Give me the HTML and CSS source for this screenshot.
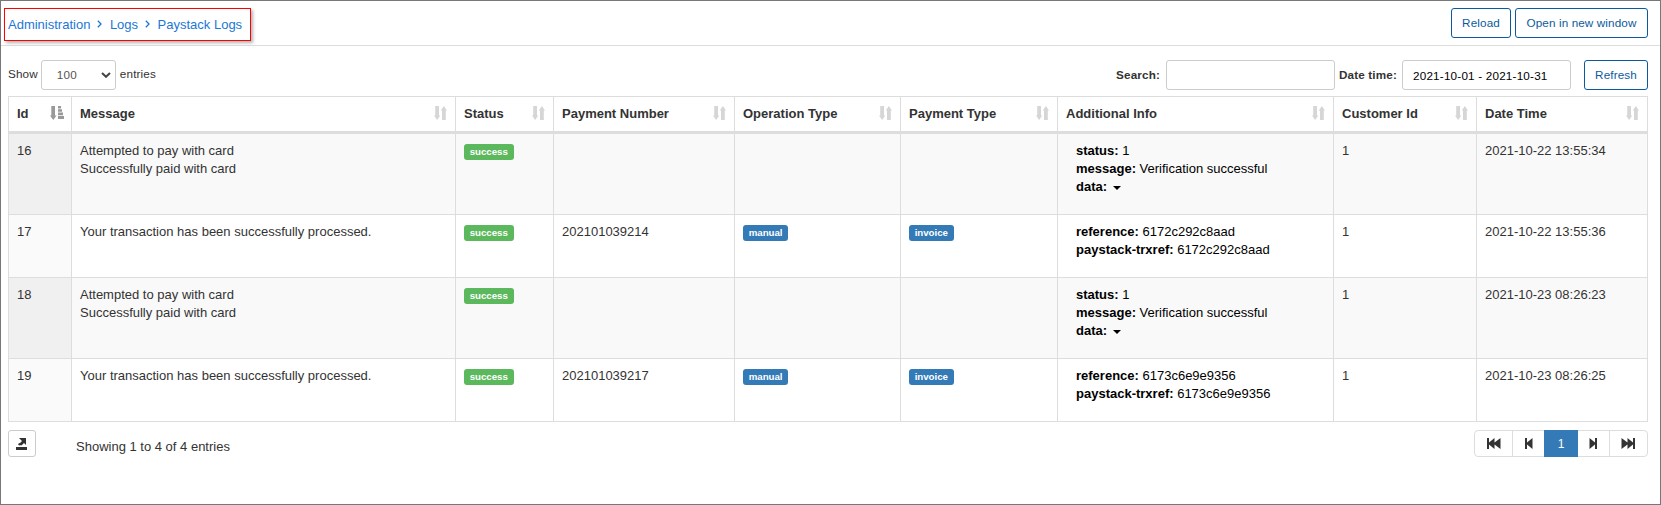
FILE: index.html
```html
<!DOCTYPE html>
<html lang="en">
<head>
<meta charset="utf-8">
<title>Paystack Logs</title>
<link rel="stylesheet" href="styles.css">
</head>
<body>
<svg class="defs" width="0" height="0">
  <symbol id="sort" viewBox="0 0 13 14"><path d="M1.200 0h3.800v9.500h1.300L3.100 14 0 9.500h1.200zM8 14V4.500H6.700L9.900 0 13 4.500h-1.200V14z"/></symbol>
  <symbol id="sort-asc" viewBox="0 0 14 14"><path d="M1.300 0h3.700v9.500h1.500l-3.250 4.500L0 9.500h1.300zM8 0h3v2.500H8zM8 3.200h4v2.600H8zM8 6.600h5v2.600H8zM8 10h6v3H8z"/></symbol>
  <symbol id="prev" viewBox="0 0 8 11"><path d="M0 0h2v4.500L7.500 0v11L2 6.500V11H0z"/></symbol>
  <symbol id="first" viewBox="0 0 14 11"><path d="M0 0h2v4.500L7.500 0v4.500L13.500 0v11L7.500 6.500V11L2 6.500V11H0z"/></symbol>
</svg>
<div class="page">
  <header class="topbar">
    <nav class="breadcrumb">
      <a>Administration</a><svg class="chevron" viewBox="0 0 5 8"><path d="M.8 .8 4 4 .8 7.200"/></svg><a>Logs</a><svg class="chevron" viewBox="0 0 5 8"><path d="M.8 .8 4 4 .8 7.200"/></svg><a>Paystack Logs</a>
    </nav>
    <div class="actions"><button class="btn reload">Reload</button><button class="btn open">Open in new window</button></div>
  </header>
  <section class="toolbar">
    <div class="length"><span>Show</span><div class="select"><span>100</span><svg viewBox="0 0 10 6"><path d="M1 1l4 3.800L9 1"/></svg></div><span>entries</span></div>
    <div class="filters">
      <label class="search-label">Search:</label><div class="input search"></div>
      <label class="date-label">Date time:</label><div class="input date">2021-10-01 - 2021-10-31</div>
      <button class="btn refresh">Refresh</button>
    </div>
  </section>
  <table class="logs">
    <colgroup><col class="c-id"><col class="c-message"><col class="c-status"><col class="c-number"><col class="c-operation"><col class="c-payment"><col class="c-info"><col class="c-customer"><col class="c-date"></colgroup>
    <thead><tr>
      <th><div class="head">Id<svg class="sorted"><use href="#sort-asc"/></svg></div></th>
      <th><div class="head">Message<svg><use href="#sort"/></svg></div></th>
      <th><div class="head">Status<svg><use href="#sort"/></svg></div></th>
      <th><div class="head">Payment Number<svg><use href="#sort"/></svg></div></th>
      <th><div class="head">Operation Type<svg><use href="#sort"/></svg></div></th>
      <th><div class="head">Payment Type<svg><use href="#sort"/></svg></div></th>
      <th><div class="head">Additional Info<svg><use href="#sort"/></svg></div></th>
      <th><div class="head">Customer Id<svg><use href="#sort"/></svg></div></th>
      <th><div class="head">Date Time<svg><use href="#sort"/></svg></div></th>
    </tr></thead>
    <tbody>
      <tr><td>16</td><td>Attempted to pay with card<br>Successfully paid with card</td><td><span class="label success">success</span></td><td></td><td></td><td></td><td><div class="info"><b>status:</b> 1<br><b>message:</b> Verification successful<br><b>data:</b> <i class="caret"></i></div></td><td>1</td><td>2021-10-22 13:55:34</td></tr>
      <tr><td>17</td><td>Your transaction has been successfully processed.</td><td><span class="label success">success</span></td><td>202101039214</td><td><span class="label">manual</span></td><td><span class="label">invoice</span></td><td><div class="info"><b>reference:</b> 6172c292c8aad<br><b>paystack-trxref:</b> 6172c292c8aad</div></td><td>1</td><td>2021-10-22 13:55:36</td></tr>
      <tr><td>18</td><td>Attempted to pay with card<br>Successfully paid with card</td><td><span class="label success">success</span></td><td></td><td></td><td></td><td><div class="info"><b>status:</b> 1<br><b>message:</b> Verification successful<br><b>data:</b> <i class="caret"></i></div></td><td>1</td><td>2021-10-23 08:26:23</td></tr>
      <tr><td>19</td><td>Your transaction has been successfully processed.</td><td><span class="label success">success</span></td><td>202101039217</td><td><span class="label">manual</span></td><td><span class="label">invoice</span></td><td><div class="info"><b>reference:</b> 6173c6e9e9356<br><b>paystack-trxref:</b> 6173c6e9e9356</div></td><td>1</td><td>2021-10-23 08:26:25</td></tr>
    </tbody>
  </table>
  <footer class="footer">
    <button class="export"><svg viewBox="0 0 11 12"><path d="M3 0h7v7L8 5 5.500 7.500 3.500 5.500 6 3zM0 9h11v3H0zM2 6l1.500-1L5 7 3 7.500z"/></svg></button>
    <span class="summary">Showing 1 to 4 of 4 entries</span>
    <div class="pages">
      <a class="wide"><svg width="14" height="11"><use href="#first"/></svg></a>
      <a class="step"><svg width="8" height="11"><use href="#prev"/></svg></a>
      <a class="current">1</a>
      <a class="step next"><svg class="flip" width="8" height="11"><use href="#prev"/></svg></a>
      <a class="wide last"><svg class="flip" width="14" height="11"><use href="#first"/></svg></a>
    </div>
  </footer>
</div>
</body>
</html>
```

FILE: styles.css
```css
* { box-sizing: border-box; }
body {
  margin: 0;
  color: #333;
  background: #fff;
  font: 13px/18px "Liberation Sans", Arial, sans-serif;
}
button { font: inherit; padding: 0; background: #fff; }
.defs { display: block; }
.page { height: 505px; border: 1px solid #777; overflow: hidden; }

.topbar {
  display: flex;
  justify-content: space-between;
  height: 45px;
  padding: 7px 12px 0 3px;
  border-bottom: 1px solid #ddd;
}
.breadcrumb {
  display: flex;
  align-items: center;
  width: 247px;
  height: 33px;
  padding: 1px 0 0 3px;
  border: 1px solid #f00;
  box-shadow: 2px 2px 3px rgba(0, 0, 0, .3);
  color: #1c77d4;
}
.chevron { width: 5px; height: 8px; margin: 0 7.5px 2px 7px; fill: none; stroke: #1c77d4; stroke-width: 1.3; }
.actions { display: flex; gap: 4px; }
.btn {
  height: 30px;
  border: 1px solid #0b5a9d;
  border-radius: 3px;
  color: #0b5a9d;
  font-size: 11.7px;
  letter-spacing: .12px;
}
.reload { width: 60px; }
.open { width: 133px; }
.refresh { width: 64px; margin-left: 13px; }

.toolbar {
  display: flex;
  justify-content: space-between;
  height: 50px;
  padding: 14px 12px 0 7px;
  font-size: 11.7px;
  letter-spacing: .15px;
}
.length, .filters { display: flex; align-items: center; height: 30px; }
.length > span { padding-bottom: 2px; }
.select {
  display: flex;
  align-items: center;
  justify-content: space-between;
  width: 75px;
  height: 30px;
  margin: 0 4px 0 3px;
  padding: 0 4px 0 15px;
  border: 1px solid #ccc;
  border-radius: 3px;
  color: #555;
}
.select svg { width: 10px; height: 6px; fill: none; stroke: #444; stroke-width: 2; }
.filters label { font-weight: bold; }
.input {
  width: 169px;
  height: 30px;
  padding: 0 10px;
  border: 1px solid #ccc;
  border-radius: 3px;
  color: #000;
  line-height: 29px;
}
.search-label { margin-right: 6px; }
.date-label { width: 58px; margin: 0 5px 0 4px; white-space: nowrap; }
.date { width: 169px; letter-spacing: .2px; }

.logs {
  width: 1640px;
  margin-left: 7px;
  table-layout: fixed;
  border: 0 solid #ddd;
  border-width: 1px 0 0 1px;
  border-collapse: separate;
  border-spacing: 0;
}
.c-id { width: 63px; }
.c-message { width: 384px; }
.c-status { width: 98px; }
.c-number { width: 181px; }
.c-operation { width: 166px; }
.c-payment { width: 157px; }
.c-info { width: 276px; }
.c-customer { width: 143px; }
.c-date { width: 171px; }
.logs th, .logs td {
  padding: 8px;
  border: 0 solid #ddd;
  border-width: 0 1px 1px 0;
  text-align: left;
  vertical-align: top;
}
.logs th { border-bottom-width: 3px; }
.head { display: flex; justify-content: space-between; height: 18px; }
.head svg { width: 13px; height: 14px; margin: 1px 0 0; fill: #d6d6d6; }
.head .sorted { width: 14px; margin-right: -1px; fill: #999; }
.logs tbody tr:nth-child(odd) { background: #f9f9f9; }
.logs tbody td:first-child { background: #fafafa; }
.logs tbody tr:nth-child(odd) td:first-child { background: #f0f0f0; }
.label {
  display: block;
  width: max-content;
  height: 16px;
  margin-top: 2px;
  padding: 0 .58em;
  border-radius: 3px;
  color: #fff;
  background: #337ab7;
  font-size: 9.7px;
  font-weight: bold;
  line-height: 16px;
}
.success { background: #5cb85c; }
.info { margin: 0 0 10px 10px; color: #000; }
.caret {
  display: inline-block;
  margin-left: 2px;
  border: 4px solid transparent;
  border-top-color: #000;
  border-bottom: 0;
  vertical-align: middle;
}

.footer { display: flex; align-items: flex-start; padding: 8px 12px 0 7px; }
.export {
  display: grid;
  place-items: center;
  width: 28px;
  height: 27px;
  border: 1px solid #ccc;
  border-radius: 3px;
}
.export svg { width: 11px; height: 12px; margin-right: 1px; fill: #333; }
.summary { margin: 8px auto 0 40px; }
.pages { display: flex; height: 27px; border: 1px solid #ddd; border-radius: 4px; }
.pages a { display: grid; place-items: center; border-right: 1px solid #ddd; fill: #333; }
.pages .wide { width: 38px; }
.pages .step { width: 31px; border: 0; }
.pages .next { width: 32px; padding-right: 1px; border-right: 1px solid #ddd; }
.pages .last { width: 37px; padding-right: 1px; border: 0; }
.pages .current { width: 34px; height: 27px; margin-top: -1px; border: 0; color: #fff; background: #337ab7; font-size: 12px; }
.flip { transform: scaleX(-1); }
```
